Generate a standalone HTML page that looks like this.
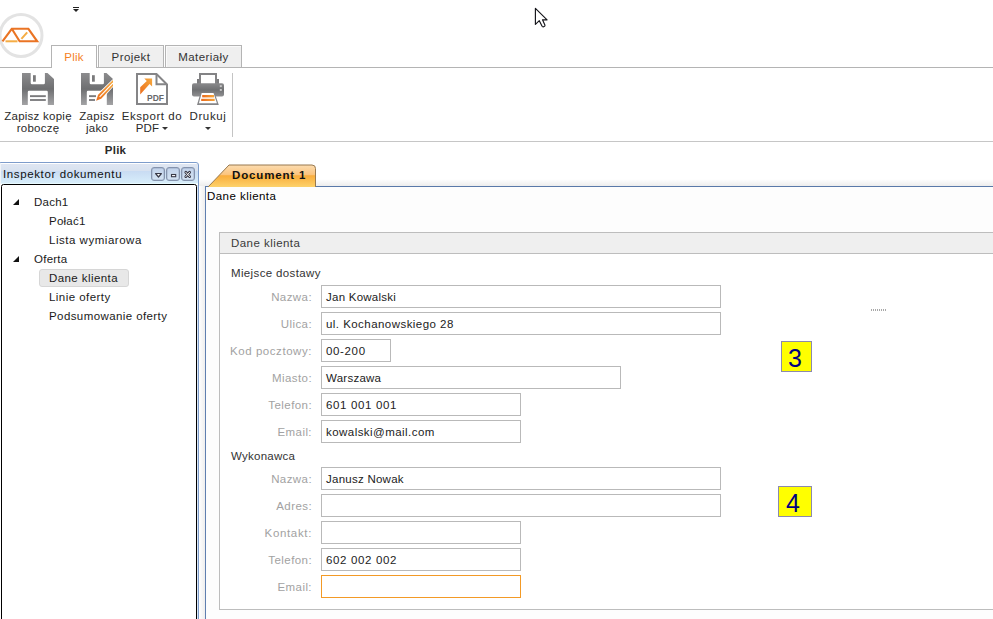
<!DOCTYPE html>
<html><head><meta charset="utf-8">
<style>
*{box-sizing:border-box}
html,body{margin:0;padding:0;width:993px;height:619px;overflow:hidden;background:#fff;font-family:"Liberation Sans",sans-serif;font-size:11.5px;color:#222}
.a{position:absolute;white-space:nowrap;line-height:14px}
.t{margin-top:1px;letter-spacing:0.25px}
.hl{position:absolute;height:1px}
.vl{position:absolute;width:1px}
.tab{position:absolute;top:45px;height:23px;border:1px solid #b4b4b4;border-bottom:none;background:#efefef;text-align:center;line-height:22px;color:#333;letter-spacing:0.25px}
.lbl{color:#a2a2a2;text-align:right;width:120px;letter-spacing:0.42px}
.inp{position:absolute;left:321px;height:23px;border:1px solid #b9b9b9;background:#fff;padding-left:4px;line-height:22px;color:#222;letter-spacing:0.25px}
.tree{color:#1a1a1a}
.pb{top:167px;width:14px;height:14px;border:1px solid #8593ad;border-radius:3px;background:linear-gradient(#c2d2ea,#d4e3f3);box-shadow:inset 0 0 0 0.5px rgba(120,135,165,.5)}
.dd{display:inline-block;width:0;height:0;border-left:3px solid transparent;border-right:3px solid transparent;border-top:3px solid #333;vertical-align:2px}
</style></head><body>

<!-- logo -->
<svg class="a" style="left:0;top:12px" width="46" height="48" viewBox="0 0 46 48">
  <circle cx="21" cy="23.5" r="21" fill="none" stroke="#e3e3e3" stroke-width="3"/>
  <path d="M2.5 29.3 L11.8 16.8 L28.4 16.8 L37.2 29.3 L19.6 29.3 L11.8 16.8" fill="none" stroke="#ea7424" stroke-width="2.1" stroke-linejoin="miter"/>
  <path d="M5.5 29.3 L17.5 29.3" stroke="#f5ad45" stroke-width="2"/>
  <path d="M27.2 20.3 L21.4 26.9" stroke="#f5ad45" stroke-width="2"/>
</svg>

<!-- QAT -->
<svg class="a" style="left:72px;top:6px" width="9" height="8" viewBox="0 0 9 8">
  <rect x="1" y="1" width="6" height="1" fill="#222"/>
  <path d="M1 3 L7 3 L4 6 Z" fill="#222"/>
</svg>

<!-- cursor -->
<svg class="a" style="left:534px;top:7px" width="16" height="22" viewBox="0 0 16 22">
  <path d="M1.4 1.4 V17.4 L5.3 13.7 L8.1 19.3 Q8.6 20.1 9.6 19.7 L10.5 19.3 Q11.2 18.9 10.9 18.1 L8.5 12.8 H13.1 Z" fill="#fff" stroke="#15151a" stroke-width="1.15" stroke-linejoin="round"/>
</svg>

<!-- ribbon tabs -->
<div class="hl" style="left:0;top:67px;width:993px;background:#b4b4b4"></div>
<div class="tab" style="left:51px;width:46px;background:#fff;height:23px;color:#f5821f">Plik</div>
<div class="tab" style="left:98px;width:66px;height:22px;box-shadow:inset 1px 1px 0 #fafafa;letter-spacing:0.45px">Projekt</div>
<div class="tab" style="left:165px;width:77px;height:22px;box-shadow:inset 1px 1px 0 #fafafa;letter-spacing:0.42px">Materiały</div>

<!-- ribbon icons -->
<svg class="a" style="left:22px;top:73px" width="32" height="32" viewBox="0 0 32 32">
  <defs><linearGradient id="fg" x1="0" y1="0" x2="0" y2="1"><stop offset="0" stop-color="#8c8c8e"/><stop offset="0.5" stop-color="#6e6f71"/><stop offset="1" stop-color="#a3a3a5"/></linearGradient></defs>
  <path d="M0 0 H8.7 V10 Q8.7 11.3 10 11.3 H21.6 Q22.9 11.3 22.9 10 V0 H25.5 L32 6 V32 H25.8 V19 Q25.8 17.8 24.6 17.8 H7 Q5.8 17.8 5.8 19 V32 H0 Z" fill="url(#fg)"/>
  <rect x="11" y="2.2" width="2.8" height="6.5" fill="#7a7a7c"/>
  <rect x="8" y="22.2" width="15.8" height="1.9" fill="#7a7a7c"/>
  <rect x="8" y="26" width="15.8" height="2" fill="#848486"/>
</svg>
<svg class="a" style="left:81px;top:73px" width="32" height="32" viewBox="0 0 32 32">
  <path d="M0 0 H8.7 V10 Q8.7 11.3 10 11.3 H21.6 Q22.9 11.3 22.9 10 V0 H25.5 L32 6 V32 H25.8 V19 Q25.8 17.8 24.6 17.8 H7 Q5.8 17.8 5.8 19 V32 H0 Z" fill="url(#fg)"/>
  <rect x="11" y="2.2" width="2.8" height="6.5" fill="#7a7a7c"/>
  <rect x="8" y="22.2" width="7" height="1.9" fill="#7a7a7c"/>
  <rect x="8" y="26" width="6" height="2" fill="#848486"/>
  <path d="M14.3 28.8 L16.4 21.1 L32 5.9 V13.9 L20.8 26.6 Z" fill="#fff"/>
  <path d="M15.1 27.8 L17.1 21.7 L32 7.1 V12.9 L20.2 25.8 Z" fill="url(#og)"/>
  <path d="M18.6 23.9 L32 10" stroke="#fff" stroke-width="1.1"/>
</svg>
<svg class="a" style="left:136px;top:73px" width="32" height="32" viewBox="0 0 32 32">
  <defs><linearGradient id="og" x1="0" y1="1" x2="1" y2="0"><stop offset="0" stop-color="#ec6f1e"/><stop offset="1" stop-color="#f6a83c"/></linearGradient></defs>
  <path d="M1 1 H20.5 L31 11.5 V31 H1 Z" fill="#fff" stroke="#858587" stroke-width="2"/>
  <path d="M20.5 1 V11.3 H31" fill="none" stroke="#858587" stroke-width="2"/>
  <path d="M8.3 5.5 H16.1 V13.4 L13.6 10.9 L4.2 21.5 V14.3 L10.8 7.9 Z" fill="url(#og)"/>
  <text x="11" y="27.6" font-family="Liberation Sans" font-size="9.8" font-weight="bold" fill="#666769" textLength="17" lengthAdjust="spacingAndGlyphs">PDF</text>
</svg>
<svg class="a" style="left:192px;top:73px" width="32" height="32" viewBox="0 0 32 32">
  <defs><linearGradient id="pg" x1="0" y1="0" x2="0" y2="1"><stop offset="0" stop-color="#8a8a8c"/><stop offset="0.5" stop-color="#6f7072"/><stop offset="1" stop-color="#909092"/></linearGradient></defs>
  <rect x="8" y="1" width="16" height="11" fill="#fff" stroke="#838385" stroke-width="2"/>
  <rect x="5" y="6" width="22" height="5" fill="#7c7c7e"/>
  <rect x="8" y="1" width="16" height="11" fill="#fff" stroke="#838385" stroke-width="2"/>
  <rect x="9" y="2" width="14" height="9" fill="#fff"/>
  <rect x="0" y="10.2" width="32" height="13.3" rx="2" fill="url(#pg)"/>
  <rect x="27.8" y="12.2" width="2" height="1.9" fill="#c8c8c8"/>
  <rect x="27.8" y="16" width="2" height="1.9" fill="#c8c8c8"/>
  <path d="M8.5 20 H22.7 L26.8 32 H5 Z" fill="#858587"/>
  <defs><linearGradient id="lg" x1="0" y1="0" x2="1" y2="0"><stop offset="0" stop-color="#e9691c"/><stop offset="1" stop-color="#f6a53a"/></linearGradient></defs>
  <path d="M9.7 20 H21.5 L24.9 30.2 H6.9 Z" fill="#fff"/>
  <rect x="10.2" y="22" width="11.8" height="2.4" fill="url(#lg)"/>
  <rect x="9.2" y="25.8" width="13.5" height="2.2" fill="url(#lg)"/>
</svg>

<!-- ribbon labels -->
<div class="t a" style="left:0;top:109px;width:76px;text-align:center;line-height:12px;color:#2a2a2a">Zapisz kopię<br>roboczę</div>
<div class="t a" style="left:72px;top:109px;width:50px;text-align:center;line-height:12px;color:#2a2a2a">Zapisz<br>jako</div>
<div class="t a" style="left:118px;top:109px;width:68px;text-align:center;line-height:12px;color:#2a2a2a"><span style="letter-spacing:0.55px">Eksport do</span><br>PDF<span class="dd" style="margin-left:3px"></span></div>
<div class="t a" style="left:184px;top:109px;width:48px;text-align:center;line-height:12px;color:#2a2a2a"><span style="letter-spacing:0.65px">Drukuj</span><br><span class="dd"></span></div>
<div class="vl" style="left:232px;top:73px;height:64px;background:#c4c4c4"></div>
<div class="hl" style="left:0;top:141px;width:993px;background:#c6c6c6"></div>
<div class="t a" style="left:90px;top:142px;width:51px;text-align:center;font-weight:bold;color:#2a2a2a">Plik</div>

<!-- inspector panel -->
<div class="a" style="left:-1px;top:162px;width:200px;height:460px;border:1px solid #7d9ccb;border-radius:2px 3px 0 0;background:linear-gradient(#fff 1px,#dfe6f2 1px,#d8e2f0 7.5px,#c9dcf3 8.5px,#d7edfa 20px,#e8faff 20px,#e8faff 21px,#fff 21px)"></div>
<div class="a" style="left:0;top:163px;width:1px;height:21px;background:#f0f4f8"></div>
<div class="t a" style="left:3px;top:166px;color:#111;letter-spacing:0.62px">Inspektor dokumentu</div>
<div class="a pb" style="left:151px"></div>
<div class="a pb" style="left:166px"></div>
<div class="a pb" style="left:181px"></div>
<svg class="a" style="left:151px;top:167px" width="45" height="14" viewBox="0 0 45 14">
  <path d="M4.6 6.5 H10.4 L7.5 10 Z" fill="#fff" stroke="#3a3a48" stroke-width="1.2" stroke-linejoin="round"/>
  <rect x="20.5" y="7.5" width="4.2" height="2.2" fill="#fff" stroke="#3a3a48" stroke-width="1.1"/>
  <path d="M34.8 5.3 L38.6 9.6 M38.6 5.3 L34.8 9.6" stroke="#3a3a48" stroke-width="2.8" stroke-linecap="round"/>
  <path d="M34.8 5.3 L38.6 9.6 M38.6 5.3 L34.8 9.6" stroke="#fff" stroke-width="0.9" stroke-linecap="round"/>
</svg>
<div class="a" style="left:1px;top:184px;width:196px;height:440px;border:1px solid #000;border-radius:2.5px;background:#fff"></div>
<div class="a" style="left:197px;top:185px;width:1px;height:440px;background:#dae8f7"></div>
<div class="a" style="left:199px;top:186px;width:6px;height:440px;background:linear-gradient(to right,#fff,#eeeeee)"></div>

<!-- tree -->
<svg class="a" style="left:13px;top:199px" width="7" height="7"><path d="M6 0 V6 H0 Z" fill="#111"/></svg>
<div class="t a tree" style="left:34px;top:194px">Dach1</div>
<div class="t a tree" style="left:49px;top:213px">Połać1</div>
<div class="t a tree" style="left:49px;top:232px;letter-spacing:0.52px">Lista wymiarowa</div>
<svg class="a" style="left:13px;top:256px" width="7" height="7"><path d="M6 0 V6 H0 Z" fill="#111"/></svg>
<div class="t a tree" style="left:34px;top:251px">Oferta</div>
<div class="a" style="left:39px;top:269px;width:90px;height:18px;border:1px solid #d6d6d6;border-radius:3px;background:#e8e8e8"></div>
<div class="t a tree" style="left:49px;top:270px;letter-spacing:0.42px">Dane klienta</div>
<div class="t a tree" style="left:49px;top:289px;letter-spacing:0.45px">Linie oferty</div>
<div class="t a tree" style="left:49px;top:308px;letter-spacing:0.41px">Podsumowanie oferty</div>

<!-- content -->
<div class="a" style="left:199px;top:179px;width:800px;height:7px;background:linear-gradient(#fff,#ededed)"></div>
<div class="a" style="left:205px;top:186px;width:800px;height:440px;border-left:1px solid #5f7fb0;border-top:1px solid #5a79a9;background:#fdfdfd"></div>
<svg class="a" style="left:207px;top:163px" width="112" height="25" viewBox="0 0 112 25">
  <defs><linearGradient id="tg" x1="0" y1="0" x2="0" y2="1"><stop offset="0" stop-color="#fcdcb0"/><stop offset="0.45" stop-color="#fbc47e"/><stop offset="0.5" stop-color="#f9ad3c"/><stop offset="1" stop-color="#fdd068"/></linearGradient></defs>
  <path d="M1.5 23.5 L22 2 H105 Q108.5 2 108.5 5.5 V23.5 Z" fill="url(#tg)" stroke="#98794f" stroke-width="1"/>
  <rect x="2" y="23" width="106" height="1" fill="#fbd06a"/>
</svg>
<div class="t a" style="left:232px;top:167px;font-weight:bold;color:#111;letter-spacing:0.85px">Document 1</div>
<div class="t a" style="left:207px;top:188px;color:#000;letter-spacing:0.45px">Dane klienta</div>

<!-- group -->
<div class="a" style="left:219px;top:232px;width:800px;height:378px;border:1px solid #bdbdbd;background:#fff"></div>
<div class="a" style="left:220px;top:233px;width:790px;height:21px;background:#efefef;border-bottom:1px solid #bdbdbd"></div>
<div class="t a" style="left:231px;top:235px;color:#3a3a3a;letter-spacing:0.45px">Dane klienta</div>
<div class="t a" style="left:231px;top:265px;color:#333;letter-spacing:0.36px">Miejsce dostawy</div>
<div class="t a" style="left:231px;top:448px;color:#333">Wykonawca</div>

<div class="t a lbl" style="left:192px;top:289px">Nazwa:</div>
<div class="t a lbl" style="left:192px;top:316px">Ulica:</div>
<div class="t a lbl" style="left:192px;top:343px;letter-spacing:0.55px">Kod pocztowy:</div>
<div class="t a lbl" style="left:192px;top:370px">Miasto:</div>
<div class="t a lbl" style="left:192px;top:397px">Telefon:</div>
<div class="t a lbl" style="left:192px;top:424px">Email:</div>
<div class="t a lbl" style="left:192px;top:471px">Nazwa:</div>
<div class="t a lbl" style="left:192px;top:498px">Adres:</div>
<div class="t a lbl" style="left:192px;top:525px;letter-spacing:0.65px">Kontakt:</div>
<div class="t a lbl" style="left:192px;top:552px">Telefon:</div>
<div class="t a lbl" style="left:192px;top:579px">Email:</div>

<div class="inp" style="top:285px;width:400px">Jan Kowalski</div>
<div class="inp" style="top:312px;width:400px;letter-spacing:0.45px">ul. Kochanowskiego 28</div>
<div class="inp" style="top:339px;width:70px;letter-spacing:0.65px">00-200</div>
<div class="inp" style="top:366px;width:300px">Warszawa</div>
<div class="inp" style="top:393px;width:200px;letter-spacing:0.65px">601 001 001</div>
<div class="inp" style="top:420px;width:200px;letter-spacing:0.45px">kowalski@mail.com</div>
<div class="inp" style="top:467px;width:400px">Janusz Nowak</div>
<div class="inp" style="top:494px;width:400px"></div>
<div class="inp" style="top:521px;width:200px"></div>
<div class="inp" style="top:548px;width:200px;letter-spacing:0.65px">602 002 002</div>
<div class="inp" style="top:575px;width:200px;border-color:#f39a26"></div>

<!-- markers -->
<div class="a" style="left:781px;top:341px;width:31px;height:31px;border:1px solid #8c8aac;background:#ff0"></div>
<div class="a" id="d3" style="left:788px;top:346px;color:#000080;font-size:25px;line-height:25px">3</div>
<div class="a" style="left:778px;top:486px;width:34px;height:31px;border:1px solid #8c8aac;background:#ff0"></div>
<div class="a" id="d4" style="left:786px;top:491px;color:#000080;font-size:25px;line-height:25px">4</div>
<svg class="a" style="left:870px;top:308px" width="18" height="4"><g fill="#a8a8a8"><rect x="1" y="1" width="1" height="2"/><rect x="3" y="1" width="1" height="2"/><rect x="5" y="1" width="1" height="2"/><rect x="7" y="1" width="1" height="2"/><rect x="9" y="1" width="1" height="2"/><rect x="11" y="1" width="1" height="2"/><rect x="13" y="1" width="1" height="2"/><rect x="15" y="1" width="1" height="2"/></g></svg>

</body></html>
